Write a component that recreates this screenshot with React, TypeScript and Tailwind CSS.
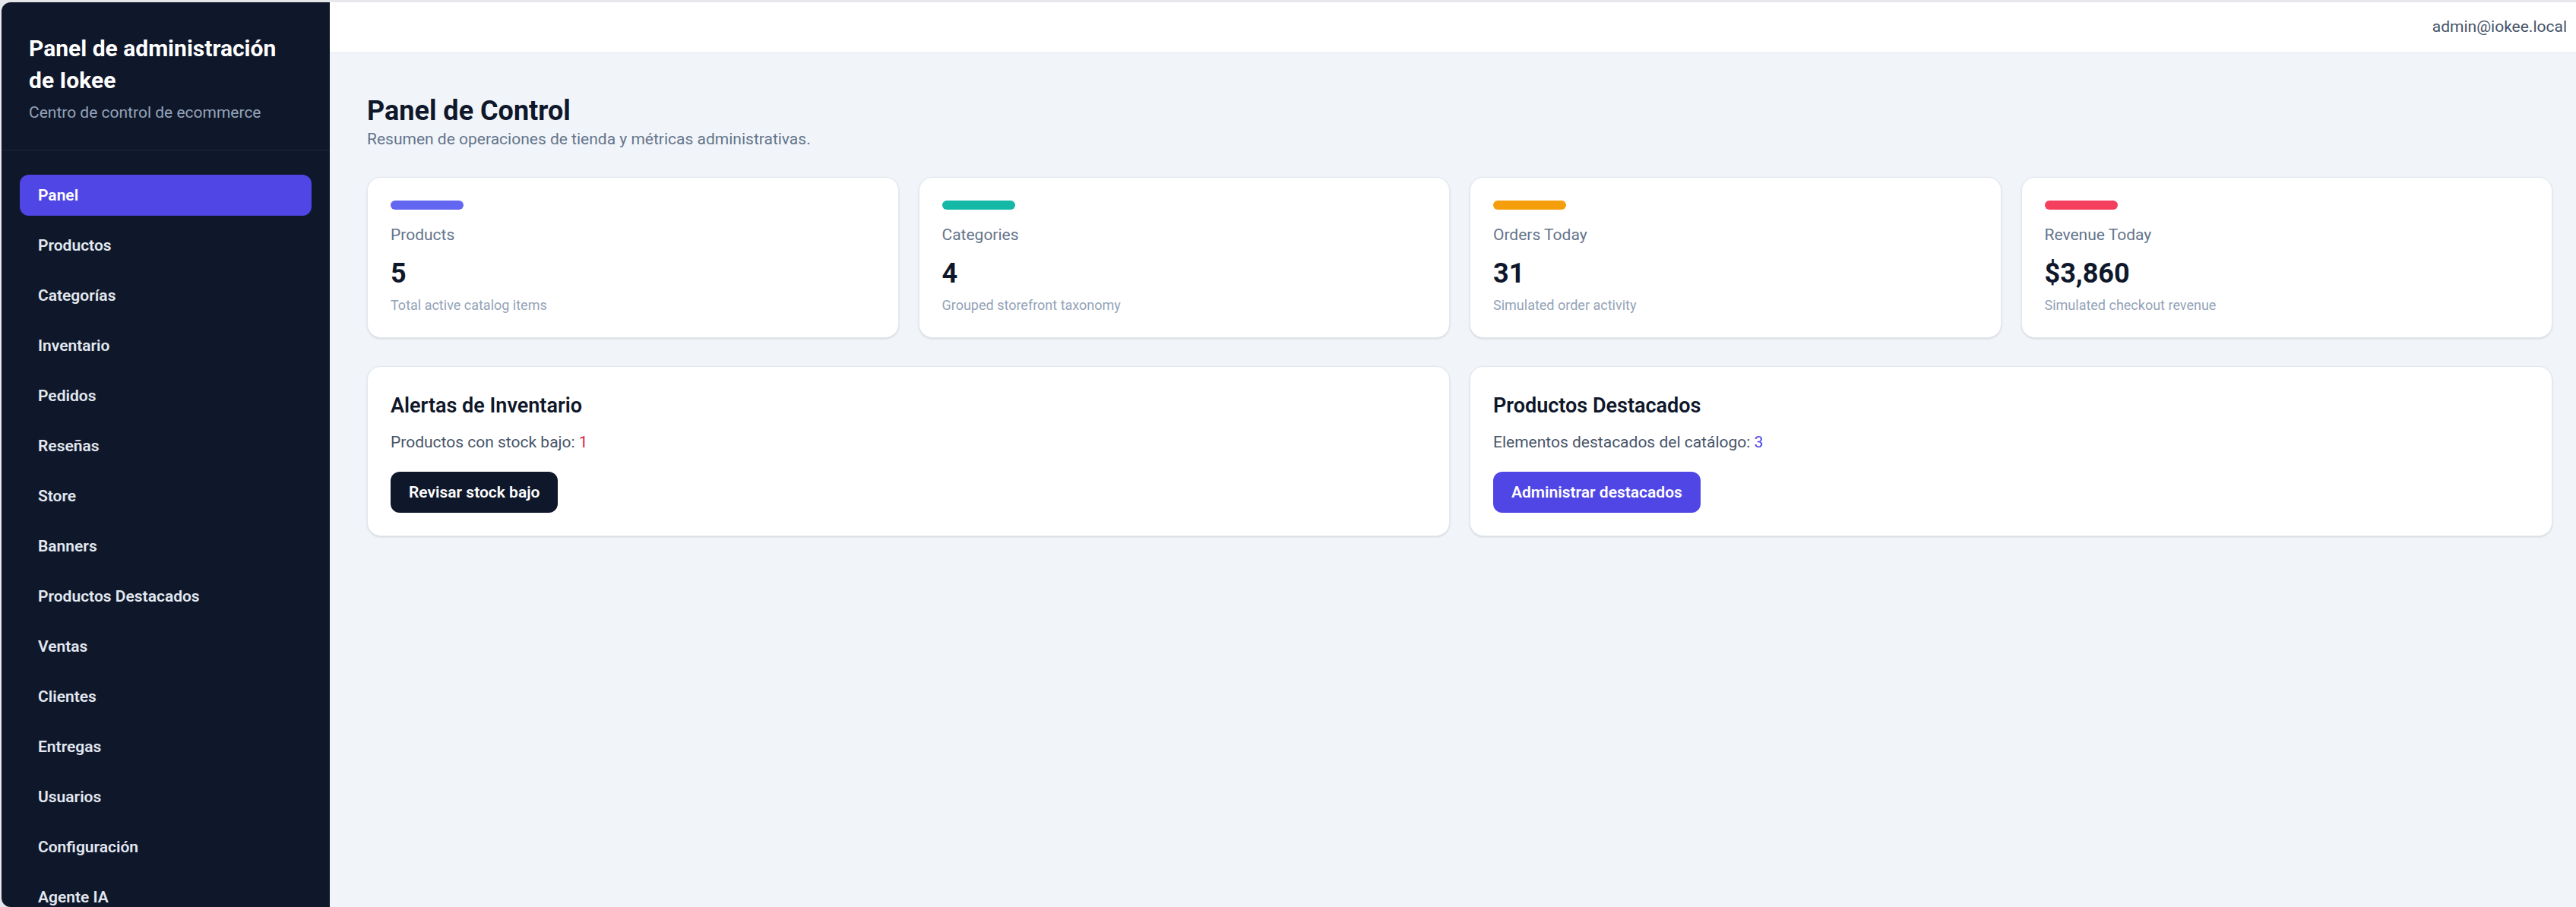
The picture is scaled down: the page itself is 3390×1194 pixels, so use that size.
import React from 'react';

const navItems = [
  'Panel',
  'Productos',
  'Categorías',
  'Inventario',
  'Pedidos',
  'Reseñas',
  'Store',
  'Banners',
  'Productos Destacados',
  'Ventas',
  'Clientes',
  'Entregas',
  'Usuarios',
  'Configuración',
  'Agente IA',
];

const stats = [
  { label: 'Products', value: '5', note: 'Total active catalog items', bar: 'bg-[#6366f1]' },
  { label: 'Categories', value: '4', note: 'Grouped storefront taxonomy', bar: 'bg-[#14b8a6]' },
  { label: 'Orders Today', value: '31', note: 'Simulated order activity', bar: 'bg-[#f59e0b]' },
  { label: 'Revenue Today', value: '$3,860', note: 'Simulated checkout revenue', bar: 'bg-[#f43f5e]' },
];

function Sidebar() {
  return (
    <aside className="w-[432px] shrink-0 bg-[#0f172a] overflow-hidden">
      {/* marca */}
      <div className="px-[36px] pt-[40px] pb-[34px] border-b border-[#1e293b]">
        <h1 className="text-[30px] leading-[42px] font-bold text-white">
          Panel de administración de Iokee
        </h1>
        <p className="mt-[6px] text-[21px] leading-[30px] text-[#94a3b8]">Centro de control de ecommerce</p>
      </div>

      {/* navegación */}
      <nav className="px-[24px] pt-[32px] flex flex-col gap-[12px]">
        {navItems.map((item, i) => (
          <a
            key={item}
            className={
              i === 0
                ? 'block rounded-[12px] bg-[#4f46e5] px-[24px] py-[12px] text-[21px] leading-[30px] font-semibold text-white'
                : 'block rounded-[12px] px-[24px] py-[12px] text-[21px] leading-[30px] font-semibold text-[#e2e8f0]'
            }
          >
            {item}
          </a>
        ))}
      </nav>
    </aside>
  );
}

function StatCard({ label, value, note, bar }: { label: string; value: string; note: string; bar: string }) {
  return (
    <div className="rounded-[18px] border border-[#e2e8f0] bg-white p-[30px] shadow-sm">
      <div className={`h-[12px] w-[96px] rounded-full ${bar}`} />
      <p className="mt-[18px] text-[21px] leading-[30px] text-[#64748b]">{label}</p>
      <p className="mt-[12px] text-[36px] leading-[48px] font-bold text-[#0f172a]">{value}</p>
      <p className="mt-[6px] text-[18px] leading-[24px] text-[#94a3b8]">{note}</p>
    </div>
  );
}

export default function App() {
  return (
    <div className="min-h-screen bg-[#e5e7eb] pt-[3px] pl-[2px] font-['Roboto',sans-serif]">
      <div className="flex h-[1191px] overflow-hidden rounded-l-[12px]">
        <Sidebar />

        <div className="flex flex-1 flex-col bg-[#f1f5f9]">
          {/* barra superior */}
          <header className="flex h-[67px] shrink-0 items-center justify-end border-b border-[#e2e8f0] bg-white pr-[12px] text-[21px] text-[#475569]">
            admin@iokee.local
          </header>

          <main className="pl-[49px] pr-[31px] pt-[52px]">
            <h2 className="text-[36px] leading-[48px] font-bold text-[#0f172a]">Panel de Control</h2>
            <p className="mt-[-2px] text-[21px] leading-[30px] text-[#64748b]">
              Resumen de operaciones de tienda y métricas administrativas.
            </p>

            <div className="mt-[35px] grid grid-cols-4 gap-[26px]">
              {stats.map((s) => (
                <StatCard key={s.label} {...s} />
              ))}
            </div>

            <div className="mt-[37px] grid grid-cols-2 gap-[26px]">
              <div className="rounded-[18px] border border-[#e2e8f0] bg-white p-[30px] shadow-sm">
                <h3 className="text-[27px] leading-[42px] font-semibold text-[#0f172a]">Alertas de Inventario</h3>
                <p className="mt-[12px] text-[21px] leading-[30px] text-[#475569]">
                  Productos con stock bajo: <span className="text-[#e11d48]">1</span>
                </p>
                <button className="mt-[24px] rounded-[12px] bg-[#0f172a] px-[24px] py-[12px] text-[21px] leading-[30px] font-semibold text-white">
                  Revisar stock bajo
                </button>
              </div>

              <div className="rounded-[18px] border border-[#e2e8f0] bg-white p-[30px] shadow-sm">
                <h3 className="text-[27px] leading-[42px] font-semibold text-[#0f172a]">Productos Destacados</h3>
                <p className="mt-[12px] text-[21px] leading-[30px] text-[#475569]">
                  Elementos destacados del catálogo: <span className="text-[#4f46e5]">3</span>
                </p>
                <button className="mt-[24px] rounded-[12px] bg-[#4f46e5] px-[24px] py-[12px] text-[21px] leading-[30px] font-semibold text-white">
                  Administrar destacados
                </button>
              </div>
            </div>
          </main>
        </div>
      </div>
    </div>
  );
}
